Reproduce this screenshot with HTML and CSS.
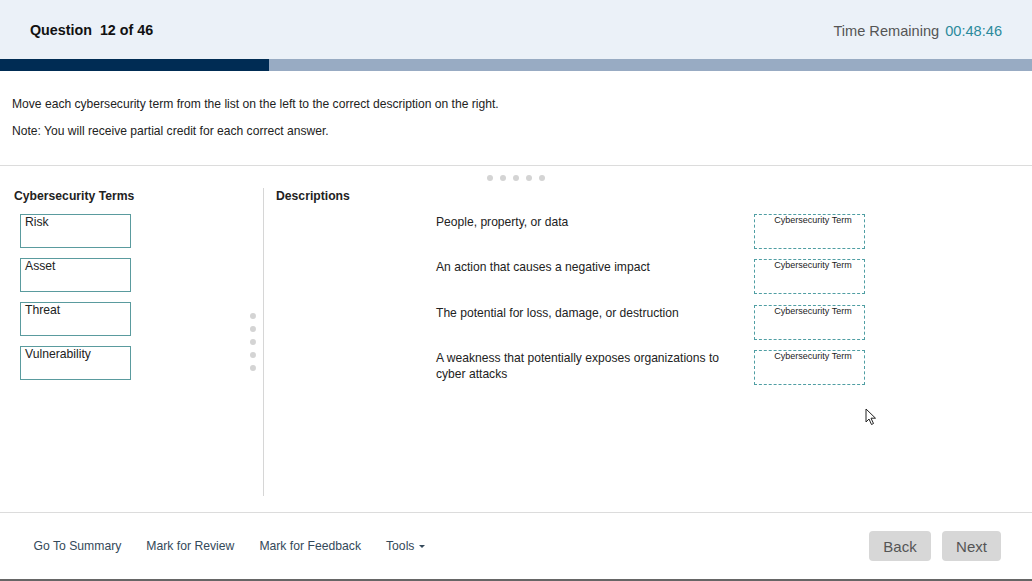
FILE: index.html
```html
<!DOCTYPE html>
<html>
<head>
  <title>Question 12 of 46</title>
  <link rel="stylesheet" href="styles.css">
</head>
<body>

  <div class="page">

    <div class="header">
      <div class="question-no">Question&nbsp; 12 of 46</div>
      <div class="timer">Time Remaining <span class="time">00:48:46</span></div>
    </div>

    <div class="progress">
      <div class="progress-done"></div>
    </div>

    <div class="instructions">
      <p>Move each cybersecurity term from the list on the left to the correct description on the right.</p>
      <p>Note: You will receive partial credit for each correct answer.</p>
    </div>

    <div class="workarea">
      <div class="handle-row">
        <span class="dot"></span><span class="dot"></span><span class="dot"></span><span class="dot"></span><span class="dot"></span>
      </div>

      <div class="panels">
        <div class="terms-panel">
          <h3>Cybersecurity Terms</h3>
          <div class="term">Risk</div>
          <div class="term">Asset</div>
          <div class="term">Threat</div>
          <div class="term">Vulnerability</div>

          <div class="side-handle">
            <span class="dot"></span><span class="dot"></span><span class="dot"></span><span class="dot"></span><span class="dot"></span>
          </div>
        </div>

        <div class="desc-panel">
          <h3>Descriptions</h3>
          <div class="desc-list">
            <div class="desc-row">
              <div class="desc-text">People, property, or data</div>
              <div class="drop-box">Cybersecurity Term</div>
            </div>
            <div class="desc-row">
              <div class="desc-text">An action that causes a negative impact</div>
              <div class="drop-box">Cybersecurity Term</div>
            </div>
            <div class="desc-row">
              <div class="desc-text">The potential for loss, damage, or destruction</div>
              <div class="drop-box">Cybersecurity Term</div>
            </div>
            <div class="desc-row">
              <div class="desc-text">A weakness that potentially exposes organizations to cyber attacks</div>
              <div class="drop-box">Cybersecurity Term</div>
            </div>
          </div>
        </div>
      </div>

      <!-- mouse pointer -->
      <svg class="cursor" width="12" height="18" viewBox="0 0 12 18">
        <path d="M1 1 L1 14 L4 11 L6.5 16.5 L8.5 15.5 L6 10.2 L10.5 10.2 Z" fill="#fff" stroke="#222" stroke-width="1" stroke-linejoin="round"/>
      </svg>
    </div>

    <div class="footer">
      <div class="footer-links">
        <a href="#">Go To Summary</a>
        <a href="#">Mark for Review</a>
        <a href="#">Mark for Feedback</a>
        <a href="#">Tools <span class="caret"></span></a>
      </div>
      <div class="footer-buttons">
        <button class="nav-btn back">Back</button>
        <button class="nav-btn next">Next</button>
      </div>
    </div>

  </div>

</body>
</html>
```

FILE: styles.css
```css
body {
  margin: 0;
  font-family: "Liberation Sans", Arial, sans-serif;
  background: #ffffff;
  color: #222;
}

.page {
  width: 1032px;
  height: 581px;
  display: flex;
  flex-direction: column;
  overflow: hidden;
}

/* Header */
.header {
  height: 59px;
  background: #ebf1f8;
  display: flex;
  justify-content: space-between;
  align-items: center;
  padding: 0 30px;
}

.question-no {
  font-size: 14.3px;
  font-weight: bold;
  color: #111;
}

.timer {
  font-size: 14.6px;
  color: #555;
  margin-top: 3px;
}

.time {
  color: #2c8a9c;
  margin-left: 2px;
}

.progress {
  height: 12px;
  background: #98abc3;
}

.progress-done {
  width: 269px;
  height: 100%;
  background: #002c54;
}

/* Instructions */
.instructions {
  padding: 25px 12px 25px;
  border-bottom: 1px solid #dcdcdc;
}

.instructions p {
  margin: 0 0 10px;
  font-size: 12.1px;
  line-height: 17px;
  color: #222;
}

.instructions p:last-child {
  margin-bottom: 0;
}

/* Work area */
.workarea {
  flex: 1;
  position: relative;
  display: flex;
  flex-direction: column;
}

.handle-row {
  height: 22px;
  display: flex;
  justify-content: center;
  align-items: center;
  gap: 7px;
  padding-top: 2px;
  box-sizing: border-box;
}

.dot {
  width: 6px;
  height: 6px;
  border-radius: 50%;
  background: #d4d4d4;
}

.panels {
  display: flex;
  height: 308px;
}

.terms-panel {
  position: relative;
  width: 249px;
  padding-left: 14px;
  border-right: 1px solid #d6d6d6;
}

h3 {
  margin: 0 0 10px;
  font-size: 12.2px;
  line-height: 16px;
  font-weight: bold;
  color: #222;
}

.term {
  box-sizing: border-box;
  width: 111px;
  height: 34px;
  margin: 0 0 10px 6px;
  padding: 0 4px;
  border: 1.5px solid #5a9b9e;
  font-size: 12.2px;
  line-height: 14px;
  color: #222;
}

.side-handle {
  position: absolute;
  right: 7px;
  top: 50%;
  transform: translateY(-50%);
  display: flex;
  flex-direction: column;
  gap: 7px;
}

.desc-panel {
  flex: 1;
  padding-left: 12px;
}

.desc-list {
  margin-left: 160px;
}

.desc-row {
  display: flex;
  height: 45.4px;
}

.desc-text {
  width: 300px;
  margin-right: 18px;
  font-size: 12.1px;
  line-height: 16px;
  color: #222;
}

.drop-box {
  box-sizing: border-box;
  width: 111px;
  height: 35px;
  border: 1px dashed #4f9ea3;
  text-align: center;
  font-size: 9px;
  line-height: 11px;
  padding: 0 0 0 7px;
  color: #222;
}

.cursor {
  position: absolute;
  left: 865px;
  top: 242px;
}

/* Footer */
.footer {
  box-sizing: border-box;
  height: 69px;
  border-top: 1px solid #dcdcdc;
  border-bottom: 2px solid #666;
  display: flex;
  justify-content: space-between;
  align-items: center;
  padding: 0 31px 0 21px;
}

.footer-links {
  display: flex;
}

.footer-links a {
  padding: 0 12.5px;
  font-size: 12.2px;
  color: #34495a;
  text-decoration: none;
}

.caret {
  display: inline-block;
  width: 0;
  height: 0;
  border-left: 3px solid transparent;
  border-right: 3px solid transparent;
  border-top: 3px solid #34495a;
  vertical-align: middle;
  margin-left: 1px;
}

.footer-buttons {
  display: flex;
  gap: 11px;
}

.nav-btn {
  height: 30px;
  border: none;
  border-radius: 4px;
  background: #d7d7d7;
  color: #555;
  font-family: "Liberation Sans", Arial, sans-serif;
  font-size: 15px;
  padding: 0;
}

.back {
  width: 62px;
}

.next {
  width: 59px;
}
```
